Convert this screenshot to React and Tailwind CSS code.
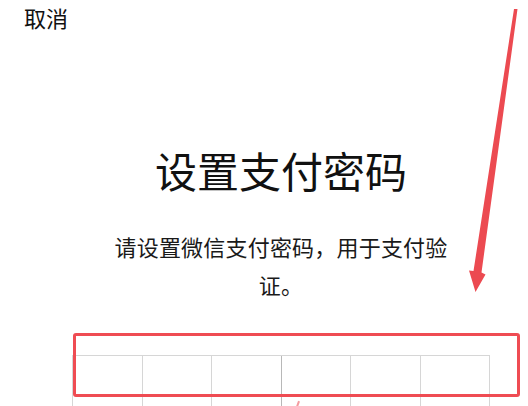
export default function App() {
  return (
    <div
      className="relative w-[528px] h-[406px] overflow-hidden bg-white text-[#111111]"
      style={{ fontFamily: '"Noto Sans CJK SC", "Noto Sans", sans-serif' }}
    >
      <div className="pl-[24px] pt-[2px] text-[22px] leading-[30px] font-normal">取消</div>

      <div className="pl-[34px] flex flex-col items-center">
        <h1 className="mt-[108px] text-[42px] leading-[60px] font-normal">
          设置支付密码
        </h1>
        <p className="mt-[27px] text-[22px] leading-[38px] text-center tracking-[0.2px] text-[#1a1a1a]">
          <span className="block">请设置微信支付密码，用于支付验</span>
          <span className="block">证。</span>
        </p>
        <div className="mt-[52px] w-[418px] grid grid-cols-6 border-l border-t border-[#d6d6d6]">
          {[0, 1, 2, 3, 4, 5].map((i) => (
            <div
              key={i}
              className={
                i === 2
                  ? "h-[70px] border-r border-[#b8b8b8]"
                  : "h-[70px] border-r border-[#d6d6d6]"
              }
            />
          ))}
        </div>
      </div>

      <div className="absolute left-[73px] top-[333px] w-[447px] h-[64px] border-[3.5px] border-[#ef4c53] rounded-[3px]" />

      <div className="absolute left-[297px] top-[401px] w-[2px] h-[6px] bg-[#f49ca0] rotate-[20deg]" />

      <svg
        className="absolute left-0 top-0"
        width="528"
        height="406"
        viewBox="0 0 528 406"
      >
        <polygon
          points="514,9 517.5,9 481.5,272.5 485.5,274.5 475.5,292 469,270.5 473.5,271"
          fill="#ec4a51"
        />
      </svg>
    </div>
  );
}
